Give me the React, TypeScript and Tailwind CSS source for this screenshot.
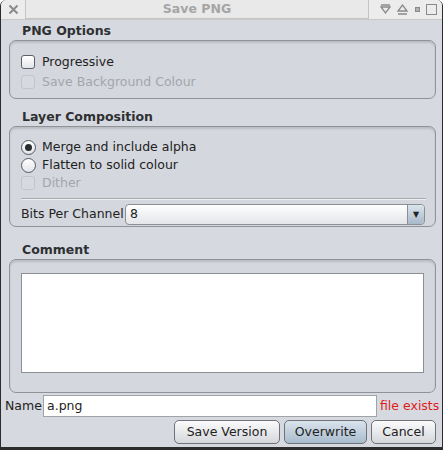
import React from "react";

const font = { fontFamily: '"DejaVu Sans", "Liberation Sans", sans-serif' };

function Check({ disabled }: { disabled?: boolean }) {
  return (
    <span
      className={
        "inline-block h-[14px] w-[14px] shrink-0 rounded-[3px] border " +
        (disabled
          ? "border-[#c2c5ca] bg-[#d6d9df]"
          : "border-[#5d6065] bg-gradient-to-b from-[#ffffff] to-[#e4e6ea]")
      }
    />
  );
}

function Radio({ checked }: { checked?: boolean }) {
  return (
    <span className="flex h-[15px] w-[15px] shrink-0 items-center justify-center rounded-full border border-[#55585d] bg-gradient-to-b from-[#ffffff] to-[#e2e4e8]">
      {checked && <span className="h-[7px] w-[7px] rounded-full bg-[#2a2c30]" />}
    </span>
  );
}

function GroupLabel({ children, h }: { children: React.ReactNode; h: string }) {
  return (
    <div className={"flex items-end whitespace-nowrap pb-[2px] pl-[13px] text-[12.5px] font-bold leading-[15px] text-[#2e3033] " + h}>
      {children}
    </div>
  );
}

function Box({ children, h }: { children: React.ReactNode; h: string }) {
  return (
    <div
      className={
        "rounded-[7px] border border-[#8f9297] bg-[#d4d7dd] shadow-[inset_0_2px_2px_rgba(0,0,0,0.12)] " + h
      }
    >
      {children}
    </div>
  );
}

function Btn({ children, w, primary }: { children: React.ReactNode; w: string; primary?: boolean }) {
  return (
    <button
      className={
        "flex h-[24px] items-center justify-center whitespace-nowrap rounded-[5px] border border-[#6f7277] text-[12.5px] text-[#222] " +
        w +
        (primary
          ? " bg-gradient-to-b from-[#d9e3ec] to-[#a9bccd]"
          : " bg-gradient-to-b from-[#fbfbfc] to-[#d5d7db]")
      }
    >
      {children}
    </button>
  );
}

export default function App() {
  return (
    <div style={font} className="h-[450px] w-[444px] bg-white">
      <div className="flex h-[450px] w-[443px] flex-col overflow-hidden rounded-t-[6px] border-x border-b-[3px] border-x-[#2c2c2c] border-b-[#2c2c2c] bg-[#d6d9df]">
        {/* title bar */}
        <div className="flex h-[20px] shrink-0 items-stretch border-b border-[#c9c9c9] bg-[#ececec]">
          <div className="flex w-[24px] items-center justify-center">
            <svg width="11" height="11" viewBox="0 0 11 11">
              <path d="M1.5 1.5 L9.5 9.5 M9.5 1.5 L1.5 9.5" stroke="#8a8a8a" strokeWidth="2" />
            </svg>
          </div>
          <div className="flex w-[344px] items-center justify-center border-x border-b border-[#c4c4c4] bg-[#e9e9e9] text-[12.5px] font-bold text-[#a5a5a5]">
            Save PNG
          </div>
          <div className="flex flex-1 items-center justify-around pl-[8px] pr-[2px]">
            <svg width="11" height="11" viewBox="0 0 11 11">
              <path d="M1 3 L10 3 L5.5 9 Z" fill="none" stroke="#8a8a8a" strokeWidth="1.3" />
              <path d="M1 1 L10 1" stroke="#8a8a8a" strokeWidth="1.3" />
            </svg>
            <svg width="11" height="11" viewBox="0 0 11 11">
              <path d="M1 7 L10 7 L5.5 1 Z" fill="none" stroke="#8a8a8a" strokeWidth="1.3" />
              <path d="M1 10 L10 10" stroke="#8a8a8a" strokeWidth="1.3" />
            </svg>
            <span className="h-[5px] w-[5px] border border-[#8a8a8a] bg-[#b0b0b0]" />
            <span className="h-[11px] w-[11px] border-[1.5px] border-[#8a8a8a]" />
          </div>
        </div>

        <div className="flex flex-1 flex-col pl-[8px] pr-[6px]">
          <GroupLabel h="h-[20px]">PNG Options</GroupLabel>
          <Box h="h-[59px]">
            <div className="flex flex-col gap-[6px] pl-[11px] pt-[14px] text-[12.5px]">
              <div className="flex h-[14px] items-center gap-[7px] whitespace-nowrap text-[#222]">
                <Check />
                Progressive
              </div>
              <div className="flex h-[14px] items-center gap-[7px] whitespace-nowrap text-[#a3a6ab]">
                <Check disabled />
                Save Background Colour
              </div>
            </div>
          </Box>

          <GroupLabel h="h-[27px]">Layer Composition</GroupLabel>
          <Box h="h-[101px]">
            <div className="flex flex-col pl-[11px] pt-[11px] text-[12.5px]">
              <div className="flex h-[18px] items-center gap-[6px] whitespace-nowrap text-[#222]">
                <Radio checked />
                Merge and include alpha
              </div>
              <div className="flex h-[18px] items-center gap-[6px] whitespace-nowrap text-[#222]">
                <Radio />
                Flatten to solid colour
              </div>
              <div className="flex h-[18px] items-center gap-[7px] whitespace-nowrap text-[#a3a6ab]">
                <Check disabled />
                Dither
              </div>
              <div className="mr-[9px] mt-[6px] h-px bg-[#a7aaaf] shadow-[0_1px_0_#eceef1]" />
              <div className="mr-[10px] mt-[5px] flex items-center text-[#222]">
                <span className="w-[104px] shrink-0 whitespace-nowrap">Bits Per Channel</span>
                <div className="flex h-[21px] flex-1 items-stretch overflow-hidden rounded-[4px] border border-[#8b8e93] bg-gradient-to-b from-[#ffffff] to-[#e3e5e9]">
                  <span className="flex flex-1 items-center pl-[4px]">8</span>
                  <span className="flex w-[17px] items-center justify-center border-l border-[#8b8e93] bg-gradient-to-b from-[#dbe4ec] to-[#a8b9c9] text-[8px] text-[#222]">
                    ▼
                  </span>
                </div>
              </div>
            </div>
          </Box>

          <GroupLabel h="h-[32px]">Comment</GroupLabel>
          <Box h="h-[134px]">
            <div className="px-[11px] pt-[13px]">
              <div className="h-[100px] border border-[#8c8f94] bg-white" />
            </div>
          </Box>

          <div className="-ml-[4px] mt-[2px] flex h-[22px] items-center whitespace-nowrap text-[12.5px]">
            <span className="w-[38px] shrink-0 text-[#222]">Name</span>
            <div className="flex h-[22px] w-[334px] shrink-0 items-center border border-[#a0a3a8] bg-white pl-[3px] text-[#222]">
              a.png
            </div>
            <span className="pl-[3px] text-[#e01b1b]">file exists</span>
          </div>

          <div className="mt-[3px] flex justify-end gap-[4px]">
            <Btn w="w-[106px]">Save Version</Btn>
            <Btn w="w-[83px]" primary>
              Overwrite
            </Btn>
            <Btn w="w-[65px]">Cancel</Btn>
          </div>
        </div>
      </div>
    </div>
  );
}
